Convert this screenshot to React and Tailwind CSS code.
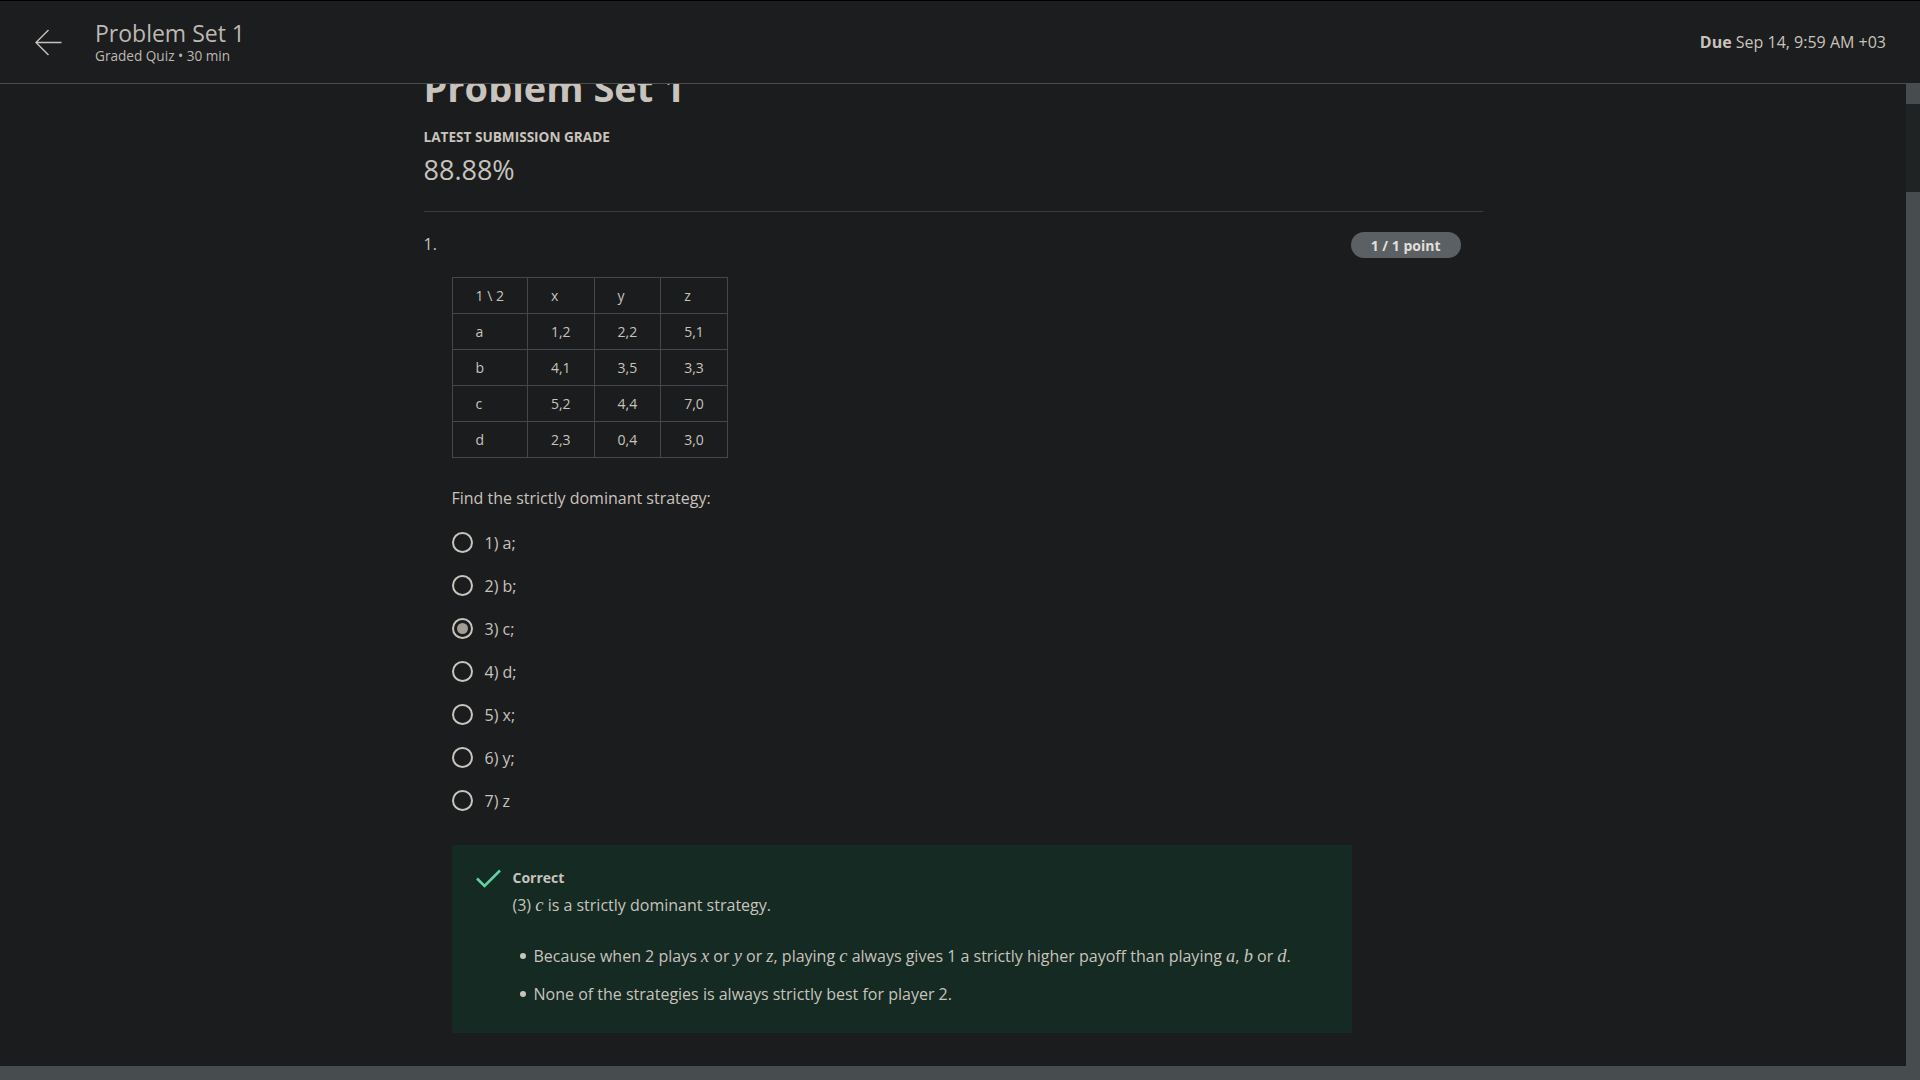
import React from "react";

const rows = [
  ["1 \\ 2", "x", "y", "z"],
  ["a", "1,2", "2,2", "5,1"],
  ["b", "4,1", "3,5", "3,3"],
  ["c", "5,2", "4,4", "7,0"],
  ["d", "2,3", "0,4", "3,0"],
];

const options = ["1) a;", "2) b;", "3) c;", "4) d;", "5) x;", "6) y;", "7) z"];

function M({ children }) {
  return (
    <span className="font-['Liberation_Serif',serif] italic text-[18.5px]">{children}</span>
  );
}

function Radio({ checked }) {
  return (
    <span className="w-[21px] h-[21px] rounded-full border-2 border-[#c9c4bc] flex items-center justify-center shrink-0">
      {checked && <span className="w-[11px] h-[11px] rounded-full bg-[#a29d95]" />}
    </span>
  );
}

export default function App() {
  return (
    <div className="w-[1920px] h-[1080px] flex flex-col bg-[#1b1c1e] text-[#c8c3bb] font-['Open_Sans',sans-serif] overflow-hidden">
      {/* top bar */}
      <header className="h-[84px] shrink-0 flex items-center border-t border-black border-b border-b-[#4b4d4f] bg-[#1c1d1f]">
        <svg className="ml-[35px]" width="27" height="27" viewBox="0 0 27 27" fill="none" stroke="#c8c3bb" strokeWidth="1.4">
          <path d="M26.5 13.5H1M13.5 1L1 13.5L13.5 26" />
        </svg>
        <div className="ml-[33px] flex flex-col">
          <div className="text-[23px] leading-[28px] text-[#bdb8b0]">Problem Set 1</div>
          <div className="text-[13.6px] leading-[18px] text-[#bdb8b0]">Graded Quiz • 30 min</div>
        </div>
        <div className="ml-auto mr-[34px] text-[16px]">
          <span className="font-bold">Due</span> Sep 14, 9:59 AM +03
        </div>
      </header>

      <div className="flex flex-1 min-h-0">
        <main className="flex-1 overflow-hidden">
          <div className="w-[1059px] mx-auto -mt-[20px]">
            <h1 className="text-[38px] leading-[46px] font-bold">Problem Set 1</h1>
            <div className="mt-[17px] text-[13.6px] leading-[20px] font-bold">LATEST SUBMISSION GRADE</div>
            <div className="mt-[5px] text-[27px] leading-[36px]">88.88%</div>
            <div className="mt-[23px] h-px bg-[#3a3c3e]" />

            <div className="mt-[20px] flex items-start justify-between pr-[22px]">
              <span className="text-[16px] leading-[24px]">1.</span>
              <span className="h-[26px] px-[20px] rounded-full bg-[#5a6063] text-[#e2dfda] text-[14px] font-bold flex items-center">
                1 / 1 point
              </span>
            </div>

            <div className="ml-[28px] mt-[19px]">
              <table className="border-collapse text-[14px]">
                <tbody>
                  {rows.map((r, i) => (
                    <tr key={i}>
                      {r.map((c, j) => (
                        <td key={j} className="border border-[#45474a] px-[23px] py-[7px] leading-[21px]">
                          {c}
                        </td>
                      ))}
                    </tr>
                  ))}
                </tbody>
              </table>

              <p className="mt-[28px] text-[16px] leading-[24px]">Find the strictly dominant strategy:</p>

              <div className="mt-[11px] flex flex-col">
                {options.map((o, i) => (
                  <label key={o} className="h-[43px] flex items-center gap-[12px] text-[16px]">
                    <Radio checked={i === 2} />
                    <span>{o}</span>
                  </label>
                ))}
              </div>

              <div className="mt-[23px] w-[900px] bg-[#142a23] pl-[24px] pt-[23px] pb-[27px] flex gap-[12px]">
                <svg className="mt-[1px] shrink-0" width="25" height="19" viewBox="0 0 25 19" fill="none" stroke="#5cd3a1" strokeWidth="2.6">
                  <path d="M1 9.5L8.5 17L24 1.5" />
                </svg>
                <div>
                  <div className="text-[14px] leading-[20px] font-bold">Correct</div>
                  <div className="mt-[5px] text-[16px] leading-[24px]">
                    (3) <M>c</M> is a strictly dominant strategy.
                  </div>
                  <ul className="mt-[27px] ml-[7px] flex flex-col gap-[14px] text-[16px] leading-[24px]">
                    <li className="flex items-center gap-[8px]">
                      <span className="w-[6px] h-[6px] rounded-full bg-[#c8c3bb]" />
                      <span>
                        Because when 2 plays <M>x</M> or <M>y</M> or <M>z</M>, playing <M>c</M> always gives 1 a strictly higher payoff than playing <M>a</M>, <M>b</M> or <M>d</M>.
                      </span>
                    </li>
                    <li className="flex items-center gap-[8px]">
                      <span className="w-[6px] h-[6px] rounded-full bg-[#c8c3bb]" />
                      <span>None of the strategies is always strictly best for player 2.</span>
                    </li>
                  </ul>
                </div>
              </div>
            </div>
          </div>
        </main>

        {/* vertical scrollbar */}
        <div className="w-[14px] shrink-0 flex flex-col">
          <div className="h-[20px] bg-[#474c4f]" />
          <div className="h-[88px] bg-[#1f2324]" />
          <div className="flex-1 bg-[#474c4f]" />
        </div>
      </div>

      {/* horizontal scrollbar */}
      <div className="h-[14px] shrink-0 bg-[#474c4f]" />
    </div>
  );
}
